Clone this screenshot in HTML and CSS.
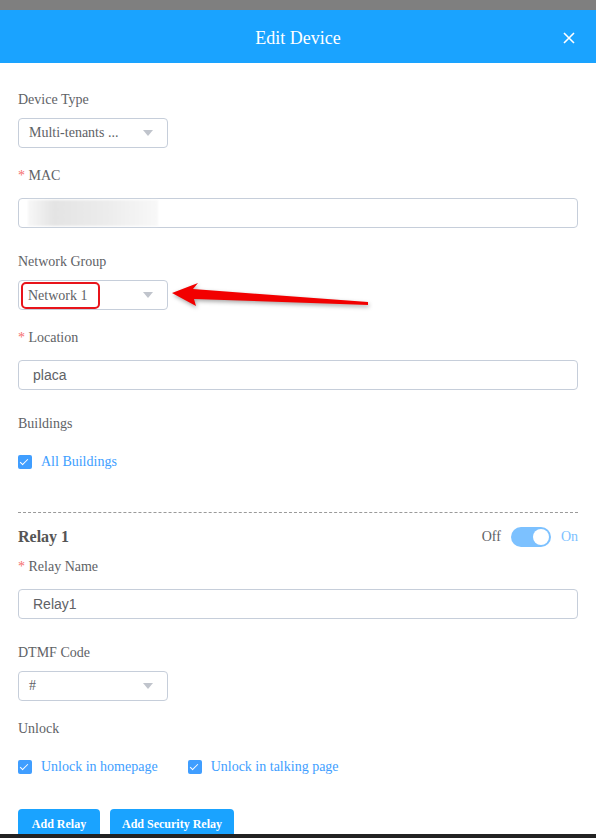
FILE: index.html
```html
<!DOCTYPE html>
<html lang="en">
<head>
    <meta charset="UTF-8">
    <meta name="viewport" content="width=device-width, initial-scale=1.0">
    <title>Edit Device</title>
    <link rel="stylesheet" href="styles.css">
</head>
<body>
    <div class="backdrop"></div>
    <div class="dialog">
        <div class="dialog-header">
            <h2>Edit Device</h2>
            <svg class="close" width="12" height="12" viewBox="0 0 12 12">
                <path d="M1 1 L11 11 M11 1 L1 11" stroke="white" stroke-width="1.6"/>
            </svg>
        </div>
        <div class="dialog-body">
            <div class="form-item short">
                <label>Device Type</label>
                <div class="select">
                    <span>Multi-tenants ...</span>
                    <i class="caret"></i>
                </div>
            </div>
            <div class="form-item required">
                <label><em>*</em> MAC</label>
                <div class="input"><span class="blurred"></span></div>
            </div>
            <div class="form-item short">
                <label>Network Group</label>
                <div class="select">
                    <span class="marked">Network 1</span>
                    <i class="caret"></i>
                </div>
            </div>
            <div class="form-item required">
                <label><em>*</em> Location</label>
                <div class="input">placa</div>
            </div>
            <div class="form-item">
                <label>Buildings</label>
                <div class="checks">
                    <span class="check"><b></b>All Buildings</span>
                </div>
            </div>

            <div class="divider"></div>

            <div class="relay-head">
                <h3>Relay 1</h3>
                <div class="switch-wrap">
                    <span class="off">Off</span>
                    <span class="switch"><span class="knob"></span></span>
                    <span class="on">On</span>
                </div>
            </div>
            <div class="form-item required">
                <label><em>*</em> Relay Name</label>
                <div class="input">Relay1</div>
            </div>
            <div class="form-item short">
                <label>DTMF Code</label>
                <div class="select">
                    <span>#</span>
                    <i class="caret"></i>
                </div>
            </div>
            <div class="form-item">
                <label>Unlock</label>
                <div class="checks">
                    <span class="check"><b></b>Unlock in homepage</span>
                    <span class="check"><b></b>Unlock in talking page</span>
                </div>
            </div>
            <div class="buttons">
                <button>Add Relay</button>
                <button>Add Security Relay</button>
            </div>

            <!-- annotation arrow pointing at the network group -->
            <svg class="pointer" width="220" height="40" viewBox="160 275 220 40">
                <polygon points="172,293 198,283 193,289 368,302 368,305 194,299 196,306" fill="#f20000"/>
            </svg>
        </div>
    </div>
    <div class="taskbar"></div>
</body>
</html>
```

FILE: styles.css
```css
body {
    margin: 0;
    height: 838px;
    display: flex;
    flex-direction: column;
    overflow: hidden;
    font-family: "Liberation Serif", serif;
    color: #606266;
    background: white;
}

.backdrop {
    flex-shrink: 0;
    height: 10px;
    background: #7f7f7f;
}

.dialog {
    flex: 1;
    min-height: 0;
    display: flex;
    flex-direction: column;
    overflow: hidden;
}

.dialog-header {
    flex-shrink: 0;
    box-sizing: border-box;
    height: 53px;
    padding-top: 3px;
    background: #1aa3ff;
    color: white;
    display: flex;
    align-items: center;
    justify-content: center;
    position: relative;
}
.dialog-header h2 {
    margin: 0;
    font-size: 18px;
    font-weight: normal;
}
.close {
    position: absolute;
    right: 21px;
    top: 22px;
}

.dialog-body {
    flex-shrink: 0;
    position: relative;
    padding: 27px 18px 0;
}

.form-item {
    margin-bottom: 24px;
}
.form-item.short {
    margin-bottom: 18px;
}
.form-item label {
    display: block;
    font-size: 14px;
    line-height: 20px;
    margin-bottom: 8px;
}
.form-item.required label {
    margin-bottom: 12px;
}
.form-item label em {
    color: #f56c6c;
    font-style: normal;
}

.select, .input {
    box-sizing: border-box;
    height: 30px;
    border: 1px solid #c6ceda;
    border-radius: 4px;
    display: flex;
    align-items: center;
    font-size: 14px;
}
.select {
    width: 150px;
    padding: 0 10px;
    justify-content: space-between;
}
.input {
    padding: 0 14px;
    font-family: "Liberation Sans", sans-serif;
}
.caret {
    width: 0;
    height: 0;
    border-left: 5px solid transparent;
    border-right: 5px solid transparent;
    border-top: 6px solid #c0c4cc;
    margin-right: 4px;
}
.marked {
    margin-left: -8px;
    padding: 3px 10px 3px 5px;
    line-height: 17px;
    border: 2px solid #e8141b;
    border-radius: 5px;
}
.blurred {
    display: block;
    margin-left: -5px;
    width: 130px;
    height: 26px;
    background: linear-gradient(90deg, #f7f7f7, #e4e4e4 20%, #ececec 60%, #f8f8f8);
    filter: blur(1px);
}

.checks {
    display: flex;
    gap: 30px;
    margin-top: 18px;
    line-height: 20px;
}
.check {
    display: flex;
    align-items: center;
    color: #409eff;
    font-size: 14px;
}
.check b {
    width: 14px;
    height: 14px;
    border-radius: 2px;
    background: #409eff;
    margin-right: 9px;
    position: relative;
}
.check b::after {
    content: "";
    position: absolute;
    left: 4px;
    top: 2px;
    width: 3px;
    height: 7px;
    border: solid white;
    border-width: 0 1px 1px 0;
    transform: rotate(45deg);
}

.divider {
    border-top: 1px dashed #9a9a9a;
    margin: 40px 0 14px;
}

.relay-head {
    display: flex;
    justify-content: space-between;
    align-items: center;
    height: 20px;
    margin-bottom: 10px;
}
.relay-head h3 {
    margin: 0;
    font-size: 16px;
    color: #555;
}
.switch-wrap {
    display: flex;
    align-items: center;
    gap: 10px;
    font-size: 14px;
}
.switch {
    width: 40px;
    height: 20px;
    border-radius: 10px;
    background: #7cc1ff;
    display: flex;
    justify-content: flex-end;
    align-items: center;
    padding: 0 2px;
    box-sizing: border-box;
}
.knob {
    width: 16px;
    height: 16px;
    border-radius: 50%;
    background: white;
}
.on {
    color: #7cc1ff;
}

.buttons {
    display: flex;
    gap: 10px;
    margin-top: 32px;
}
button {
    min-width: 82px;
    height: 30px;
    padding: 0 12px;
    border: none;
    border-radius: 4px;
    background: #1aa3ff;
    color: white;
    font-family: "Liberation Serif", serif;
    font-weight: bold;
    font-size: 12px;
}

.pointer {
    position: absolute;
    left: 160px;
    top: 212px;
    filter: drop-shadow(1px 2px 2px rgba(0,0,0,0.35));
}

.taskbar {
    flex-shrink: 0;
    height: 4px;
    background: #222;
}
```
